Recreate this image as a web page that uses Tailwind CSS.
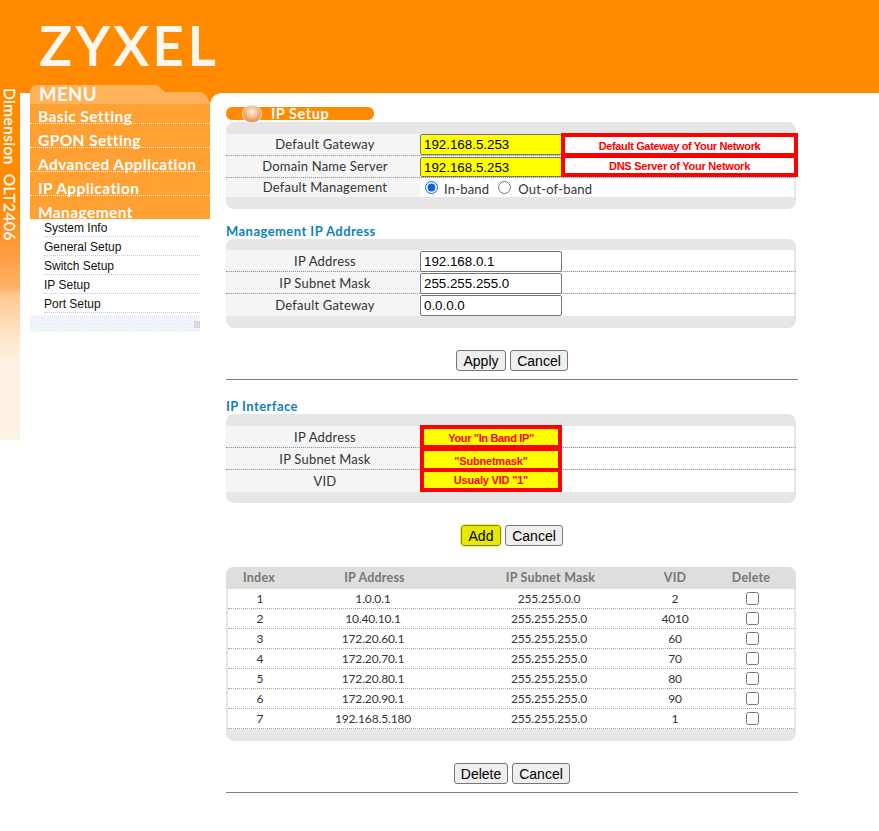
<!DOCTYPE html>
<html>
<head>
<meta charset="utf-8">
<script src="https://cdn.jsdelivr.net/npm/@tailwindcss/browser@4"></script>
</head>
<body class="bg-white font-['Lato',sans-serif] overflow-hidden">
<div class="w-[879px] h-[831px] overflow-hidden relative">
  <header class="h-[104px] bg-[#ff8a00] pl-[40px] pt-[13px]">
    <div class="font-['Lato',sans-serif] font-normal text-[52px] leading-[64px] tracking-[5.2px] text-[#fff7ee] [-webkit-text-stroke:1.8px_#fff7ee]">ZYXEL</div>
  </header>
  <div class="flex items-start">
    <aside class="relative w-[210px] -mt-[19px] flex shrink-0">
      <div class="w-[20px] h-[355px] shrink-0 bg-[linear-gradient(to_bottom,#ff8a00_0%,#ff8a00_32%,#ff9226_41%,#ffb066_57%,#ffc88f_59%,#ffe6cc_71%,#fff3e6_79%,#fff3e6_100%)] text-white text-[15.5px] font-normal leading-[20px] tracking-[0.45px] [-webkit-text-stroke:0.3px_white] [writing-mode:vertical-rl] whitespace-pre pt-[3px] pl-[1px]">Dimension  OLT2406</div>
      <div class="w-[10px] h-[347px] mt-[8px] bg-white shrink-0"></div>
      <nav class="w-[180px] shrink-0">
        <div class="relative h-[19px]">
          <svg class="absolute inset-0" width="180" height="19" viewBox="0 0 180 19"><path d="M0 19 V6 Q1 0 7 0 H127 L135 7 H170 Q177 8 180 19 Z" fill="#ffb25c"/></svg>
          <div class="relative pl-[9px] text-[18.5px] leading-[19px] font-bold tracking-[0.5px] text-white">MENU</div>
        </div>
        <div class="bg-[#ffa033] h-[115px] overflow-hidden text-white text-[15.5px] font-bold tracking-[0.4px] leading-[16px]">
          <div class="h-[24px] pt-[8px] pl-[8px] -mt-[4px] border-b border-dotted border-white">Basic Setting</div>
          <div class="h-[24px] pt-[8px] pl-[8px] border-b border-dotted border-white">GPON Setting</div>
          <div class="h-[24px] pt-[8px] pl-[8px] border-b border-dotted border-white">Advanced Application</div>
          <div class="h-[24px] pt-[8px] pl-[8px] border-b border-dotted border-white">IP Application</div>
          <div class="h-[24px] pt-[8px] pl-[8px] whitespace-nowrap">Management</div>
        </div>
        <ul class="font-['Liberation_Sans',sans-serif] text-[12px] text-[#111] leading-[16px] pl-[14px] w-[170px]">
          <li class="h-[18px] border-b border-dotted border-[#b9c9f5] pt-px">System Info</li>
          <li class="h-[19px] border-b border-dotted border-[#b9c9f5] pt-[2px]">General Setup</li>
          <li class="h-[19px] border-b border-dotted border-[#b9c9f5] pt-[2px]">Switch Setup</li>
          <li class="h-[19px] border-b border-dotted border-[#b9c9f5] pt-[2px]">IP Setup</li>
          <li class="h-[19px] border-b border-dotted border-[#b9c9f5] pt-[2px]">Port Setup</li>
        </ul>
        <div class="mt-[2px] w-[170px] h-[17px] bg-[#eef1f7] bg-[radial-gradient(#ffffff_0.7px,transparent_0.8px)] bg-[length:3px_3px] flex justify-end items-center pt-[2px]"><div class="w-[6px] h-[7px] bg-[#d9dde6] border border-[#cfd4de]"></div></div>
      </nav>
    </aside>

    <main class="relative -mt-[11px] flex-1 bg-white rounded-tl-[12px] pl-[16px] pr-[81px] pt-[13px] text-[13px] text-[#333] tracking-[0.2px]">
      <div class="relative h-[13px] w-[148px] bg-[#ff8a00] rounded-[6px] mt-[1px]">
        <div class="absolute left-[16px] -top-[2px] w-[20px] h-[18px] rounded-full border border-[#ffe2c2] bg-[radial-gradient(circle_at_50%_35%,#fff0e0_0%,#f2b88a_45%,#c8703c_100%)]"></div>
        <div class="absolute left-[45px] -top-[2px] text-[14.5px] tracking-[0.55px] leading-[17px] font-bold text-white">IP Setup</div>
      </div>
      <section class="mt-[2px] w-[570px] rounded-[8px] bg-[#e6e6e6] pt-[12px] pb-[12px] h-[87px]">
        <div class="h-[22px] flex border-b border-dotted border-[#999] pr-[2px]">
          <div class="w-[194px] shrink-0 bg-[#f5f5f5] text-center leading-[21px] pl-[4px]">Default Gateway</div>
          <div class="flex-1 bg-white flex items-start">
            <input value="192.168.5.253" class="shrink-0 w-[142px] h-[21px] pb-px bg-[#ffff00] border border-[#767676] rounded-[2px] px-[3px] font-['Liberation_Sans',sans-serif] text-[13.33px] tracking-normal text-black">
            <div class="-ml-px -mt-px w-[237px] h-[23px] shrink-0 border-[4px] border-b-[3px] border-[#ff0000] bg-white text-center font-['Liberation_Sans',sans-serif] font-bold text-[11px] leading-[18px] tracking-[-0.35px] text-[#ff0000]">Default Gateway of Your Network</div>
          </div>
        </div>
        <div class="h-[22px] flex border-b border-dotted border-[#999] pr-[2px]">
          <div class="w-[194px] shrink-0 bg-[#f5f5f5] text-center leading-[21px] pl-[4px]">Domain Name Server</div>
          <div class="flex-1 bg-white flex items-start">
            <input value="192.168.5.253" class="shrink-0 mt-px w-[142px] h-[20px] bg-[#ffff00] border border-[#767676] rounded-[2px] px-[3px] font-['Liberation_Sans',sans-serif] text-[13.33px] tracking-normal text-black">
            <div class="-ml-px w-[237px] h-[21px] shrink-0 border-[4px] border-t-[2px] border-[#ff0000] bg-white text-center font-['Liberation_Sans',sans-serif] font-bold text-[11px] leading-[17px] tracking-[-0.25px] text-[#ff0000]">DNS Server of Your Network</div>
          </div>
        </div>
        <div class="h-[19px] flex pr-[2px]">
          <div class="w-[194px] shrink-0 bg-[#f5f5f5] text-center leading-[19px] pl-[4px]">Default Management</div>
          <div class="flex-1 bg-white flex items-center pl-[5px] leading-[20px]">
            <input type="radio" name="m" checked class="w-[13px] h-[13px] m-0 accent-[#0a66d8]">
            <span class="ml-[6px] pt-[3px]">In-band</span>
            <input type="radio" name="m" class="w-[13px] h-[13px] m-0 ml-[9px]">
            <span class="ml-[7px] pt-[3px]">Out-of-band</span>
          </div>
        </div>
      </section>

      <h2 class="mt-[14px] h-[16px] text-[13px] leading-[16px] font-bold text-[#0f7fc0] tracking-[0.45px]">Management IP Address</h2>
      <section class="w-[570px] rounded-[8px] bg-[#e6e6e6] pt-[11px] h-[89px]">
        <div class="h-[22px] flex border-b border-dotted border-[#999] pr-[2px]">
          <div class="w-[194px] shrink-0 bg-[#f5f5f5] text-center leading-[22px] pl-[4px]">IP Address</div>
          <div class="flex-1 bg-white pt-px"><input value="192.168.0.1" class="block w-[142px] h-[21px] bg-white border border-[#767676] rounded-[2px] px-[3px] font-['Liberation_Sans',sans-serif] text-[13.33px] tracking-normal text-black"></div>
        </div>
        <div class="h-[22px] flex border-b border-dotted border-[#999] pr-[2px]">
          <div class="w-[194px] shrink-0 bg-[#f5f5f5] text-center leading-[22px] pl-[4px]">IP Subnet Mask</div>
          <div class="flex-1 bg-white pt-px"><input value="255.255.255.0" class="block w-[142px] h-[21px] bg-white border border-[#767676] rounded-[2px] px-[3px] font-['Liberation_Sans',sans-serif] text-[13.33px] tracking-normal text-black"></div>
        </div>
        <div class="h-[22px] flex pr-[2px]">
          <div class="w-[194px] shrink-0 bg-[#f5f5f5] text-center leading-[22px] pl-[4px]">Default Gateway</div>
          <div class="flex-1 bg-white pt-px"><input value="0.0.0.0" class="block w-[142px] h-[21px] bg-white border border-[#767676] rounded-[2px] px-[3px] font-['Liberation_Sans',sans-serif] text-[13.33px] tracking-normal text-black"></div>
        </div>
      </section>

      <div class="mt-[22px] w-[572px] flex justify-center gap-[4px] font-['Liberation_Sans',sans-serif] text-[14px] tracking-normal text-black pr-[6px] pl-[6px]">
        <button class="h-[21px] w-[50px] bg-[#efefef] border border-[#767676] rounded-[3px]">Apply</button>
        <button class="h-[21px] w-[58px] bg-[#efefef] border border-[#767676] rounded-[3px]">Cancel</button>
      </div>
      <div class="mt-[8px] w-[572px] h-px bg-[#808080]"></div>

      <h2 class="mt-[18px] h-[16px] text-[13px] leading-[16px] font-bold text-[#0f7fc0] tracking-[0.45px]">IP Interface</h2>
      <section class="w-[570px] rounded-[8px] bg-[#e6e6e6] pt-[12px] h-[89px]">
        <div class="h-[22px] flex border-b border-dotted border-[#999] pr-[2px]">
          <div class="w-[194px] shrink-0 bg-[#f5f5f5] text-center leading-[22px] pl-[4px]">IP Address</div>
          <div class="flex-1 bg-white"><div class="-mt-px w-[142px] h-[22px] border-[4px] border-b-[2px] border-[#ff0000] bg-[#ffff00] text-center font-['Liberation_Sans',sans-serif] font-bold text-[11px] leading-[19px] tracking-[-0.35px] text-[#ff0000]">Your "In Band IP"</div></div>
        </div>
        <div class="h-[22px] flex border-b border-dotted border-[#999] pr-[2px]">
          <div class="w-[194px] shrink-0 bg-[#f5f5f5] text-center leading-[22px] pl-[4px]">IP Subnet Mask</div>
          <div class="flex-1 bg-white"><div class="-mt-px w-[142px] h-[23px] border-[4px] border-b-[2px] border-[#ff0000] bg-[#ffff00] text-center font-['Liberation_Sans',sans-serif] font-bold text-[11px] leading-[20px] tracking-[-0.2px] text-[#ff0000]">"Subnetmask"</div></div>
        </div>
        <div class="h-[22px] flex pr-[2px]">
          <div class="w-[194px] shrink-0 bg-[#f5f5f5] text-center leading-[23px] pl-[4px]">VID</div>
          <div class="flex-1 bg-white"><div class="w-[142px] h-[22px] border-[4px] border-t-[2px] border-[#ff0000] bg-[#ffff00] text-center font-['Liberation_Sans',sans-serif] font-bold text-[11px] leading-[16px] tracking-[-0.2px] text-[#ff0000]">Usualy VID "1"</div></div>
        </div>
      </section>

      <div class="mt-[22px] w-[572px] flex justify-center gap-[4px] font-['Liberation_Sans',sans-serif] text-[14px] tracking-normal text-black">
        <button class="h-[21px] w-[40px] bg-[#e8e800] border border-[#767676] rounded-[3px] outline outline-[1px] outline-[#ffff00]">Add</button>
        <button class="h-[21px] w-[58px] bg-[#efefef] border border-[#767676] rounded-[3px]">Cancel</button>
      </div>

      <section class="mt-[21px] w-[570px] rounded-[8px] bg-[#e6e6e6] h-[174px] pb-[12px] text-[12px] tracking-[-0.15px]">
        <div class="h-[22px] grid grid-cols-[66px_165px_187px_62px_90px] items-center text-center rounded-t-[8px] bg-[#dededc] font-bold text-[#777] text-[12.5px] tracking-[0.2px]">
          <div>Index</div><div>IP Address</div><div>IP Subnet Mask</div><div>VID</div><div>Delete</div>
        </div>
        <div class="mx-[2px] bg-white">
          <div class="h-[20px] grid grid-cols-[64px_162px_190px_62px_92px] items-center text-center border-b border-dotted border-[#a5a5b0]"><div>1</div><div>1.0.0.1</div><div>255.255.0.0</div><div>2</div><div class="flex justify-center"><input type="checkbox" class="m-0"></div></div>
          <div class="h-[20px] grid grid-cols-[64px_162px_190px_62px_92px] items-center text-center border-b border-dotted border-[#a5a5b0]"><div>2</div><div>10.40.10.1</div><div>255.255.255.0</div><div>4010</div><div class="flex justify-center"><input type="checkbox" class="m-0"></div></div>
          <div class="h-[20px] grid grid-cols-[64px_162px_190px_62px_92px] items-center text-center border-b border-dotted border-[#a5a5b0]"><div>3</div><div>172.20.60.1</div><div>255.255.255.0</div><div>60</div><div class="flex justify-center"><input type="checkbox" class="m-0"></div></div>
          <div class="h-[20px] grid grid-cols-[64px_162px_190px_62px_92px] items-center text-center border-b border-dotted border-[#a5a5b0]"><div>4</div><div>172.20.70.1</div><div>255.255.255.0</div><div>70</div><div class="flex justify-center"><input type="checkbox" class="m-0"></div></div>
          <div class="h-[20px] grid grid-cols-[64px_162px_190px_62px_92px] items-center text-center border-b border-dotted border-[#a5a5b0]"><div>5</div><div>172.20.80.1</div><div>255.255.255.0</div><div>80</div><div class="flex justify-center"><input type="checkbox" class="m-0"></div></div>
          <div class="h-[20px] grid grid-cols-[64px_162px_190px_62px_92px] items-center text-center border-b border-dotted border-[#a5a5b0]"><div>6</div><div>172.20.90.1</div><div>255.255.255.0</div><div>90</div><div class="flex justify-center"><input type="checkbox" class="m-0"></div></div>
          <div class="h-[20px] grid grid-cols-[64px_162px_190px_62px_92px] items-center text-center border-b border-dotted border-[#a5a5b0]"><div>7</div><div>192.168.5.180</div><div>255.255.255.0</div><div>1</div><div class="flex justify-center"><input type="checkbox" class="m-0"></div></div>
        </div>
      </section>

      <div class="mt-[22px] w-[572px] flex justify-center gap-[4px] font-['Liberation_Sans',sans-serif] text-[14px] tracking-normal text-black">
        <button class="h-[21px] w-[54px] bg-[#efefef] border border-[#767676] rounded-[3px]">Delete</button>
        <button class="h-[21px] w-[58px] bg-[#efefef] border border-[#767676] rounded-[3px]">Cancel</button>
      </div>
      <div class="mt-[8px] w-[572px] h-px bg-[#808080]"></div>
    </main>
  </div>
</div>
</body>
</html>
